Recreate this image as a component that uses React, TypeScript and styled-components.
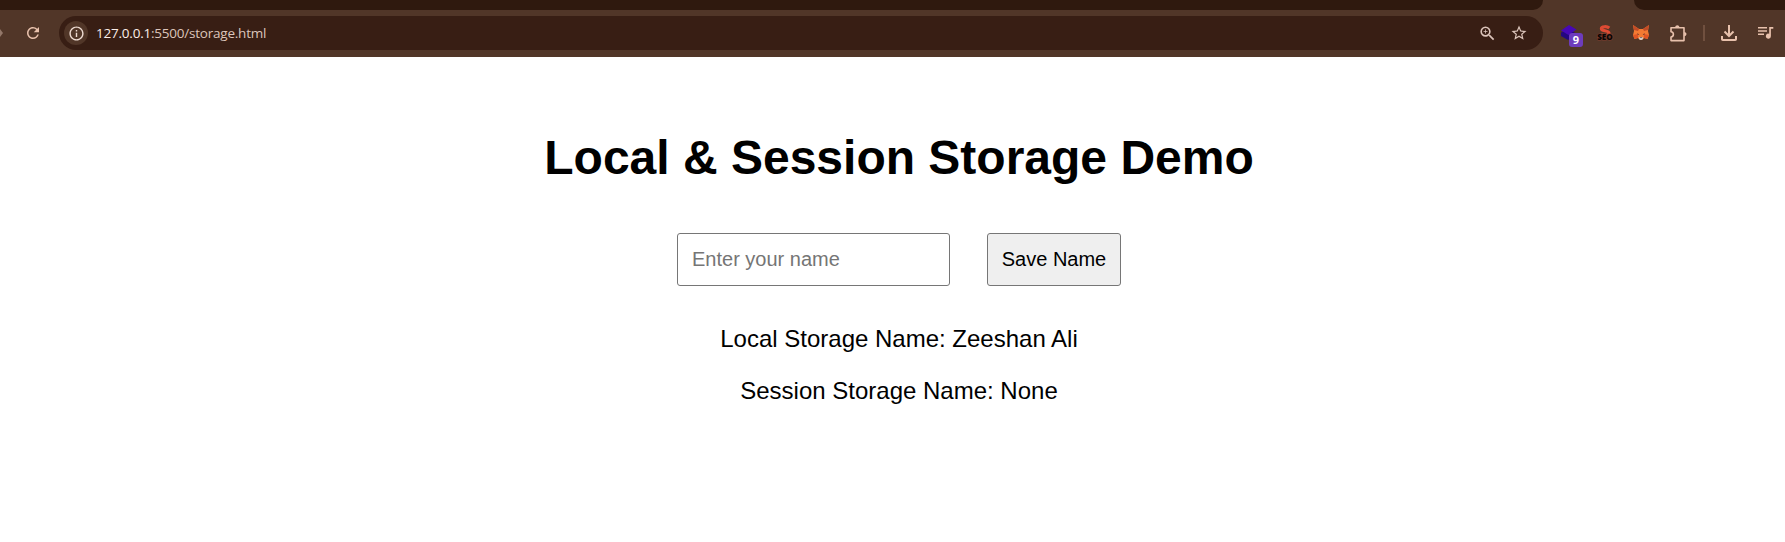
import React from "react";
import styled, { createGlobalStyle } from "styled-components";
import { MdRefresh, MdOutlineInfo, MdZoomIn, MdStarOutline } from "react-icons/md";

const GlobalStyle = createGlobalStyle`
  * { box-sizing: border-box; }
  body { margin: 0; background: #fff; overflow: hidden; }
`;

const Screen = styled.div`
  width: 1785px;
  height: 542px;
  overflow: hidden;
  background: #fff;
`;

const TabStrip = styled.div`
  display: flex;
  justify-content: space-between;
  height: 10px;
  background: #513628;
`;

const InactiveTabs = styled.div<{ $width: number; $side: "left" | "right" }>`
  width: ${(p) => p.$width}px;
  height: 10px;
  background: #2f190e;
  border-radius: ${(p) => (p.$side === "left" ? "0 0 10px 0" : "0 0 0 10px")};
`;

const Toolbar = styled.div`
  display: flex;
  align-items: center;
  height: 47px;
  padding-bottom: 1px;
  background: #513628;
  color: #e8c1ac;
`;

const Navigation = styled.div`
  display: flex;
  align-items: center;
  width: 59px;
  gap: 20px;
  svg { display: block; flex: none; }
`;

const AddressBar = styled.div`
  display: flex;
  align-items: center;
  width: 1484px;
  height: 34px;
  padding: 0 15px 0 5px;
  border-radius: 17px;
  background: #381e14;
  color: #dcc5bb;
`;

const SiteInfo = styled.div`
  display: grid;
  place-items: center;
  width: 24px;
  height: 24px;
  border-radius: 50%;
  background: #513628;
  color: #eedbd2;
`;

const Url = styled.div`
  flex: 1;
  padding-left: 8px;
  font: 13.5px/20px "Open Sans", sans-serif;
  letter-spacing: -0.22px;
  color: #dcc5bb;
  span { color: #fbeee8; }
`;

const BarActions = styled.div`
  display: flex;
  align-items: center;
  gap: 13px;
`;

const Extensions = styled.div`
  display: flex;
  align-items: center;
  padding-left: 17px;
  svg { display: block; overflow: visible; }
`;

const Slot = styled.div<{ $gap: number }>`
  position: relative;
  flex: none;
  margin-right: ${(p) => p.$gap}px;
`;

const Badge = styled.span`
  position: absolute;
  left: 9px;
  top: 8px;
  width: 14px;
  height: 14px;
  border-radius: 3px;
  background: #6d3cbd;
  color: #fff;
  font: bold 11px/14px "Open Sans", sans-serif;
  text-align: center;
`;

const Divider = styled.div`
  width: 2px;
  height: 16px;
  margin-right: 16px;
  background: #70503f;
`;

const Page = styled.main`
  display: flex;
  flex-direction: column;
  align-items: center;
  width: 1798px;
  padding-top: 74px;
  font-family: "Liberation Sans", Arial, sans-serif;
  color: #000;
`;

const Title = styled.h1`
  margin: 0;
  font-size: 48px;
  line-height: 54px;
  white-space: nowrap;
`;

const Form = styled.div`
  display: flex;
  gap: 37px;
  margin-top: 48px;
`;

const NameInput = styled.input`
  width: 273px;
  height: 53px;
  padding: 1px 14px 1px;
  border: 1px solid #767676;
  border-radius: 3px;
  background: #fff;
  font: 20px "Liberation Sans", Arial, sans-serif;
  &::placeholder { color: #757575; }
`;

const SaveButton = styled.button`
  width: 134px;
  height: 53px;
  padding: 0;
  border: 1px solid #767676;
  border-radius: 3px;
  background: #efefef;
  color: #000;
  font: 20px "Liberation Sans", Arial, sans-serif;
`;

const Result = styled.p`
  margin: 0 0 24px;
  font-size: 24px;
  line-height: 28px;
  white-space: nowrap;
`;

const Results = styled.div`
  margin-top: 39px;
  text-align: center;
`;

const ForwardTip = () => (
  <svg width="4" height="8" viewBox="0 0 4 8"><path d="M0 0L3 4L0 8Z" fill="#937769" /></svg>
);

const LayersIcon = () => (
  <svg width="17" height="16" viewBox="0 0 17 16">
    <path d="M1 7.5L8 4L17 9L8 15L1 11Z" fill="#24077f" />
    <path d="M1 5.5L9 0L16.5 4.5L8.5 10Z" fill="#4708b5" />
  </svg>
);

const SeoIcon = () => (
  <svg width="16" height="17" viewBox="0 0 16 17">
    <path d="M12.3 3C10 1.2 4.4 1.2 4.4 3.7C4.4 6.2 12 5.2 12 8.2C12 11 7 11.2 4 9.5" fill="none" stroke="#dd4a33" strokeWidth="3.2" />
    <text x="8" y="15" textAnchor="middle" fontFamily="Open Sans, sans-serif" fontWeight="800" fontSize="8.2" fill="#080504" stroke="#7d3a2c" strokeWidth="1.2" paintOrder="stroke">SEO</text>
  </svg>
);

const FoxIcon = () => (
  <svg width="16" height="16" viewBox="0 0 16 16">
    <path d="M0 0L6 4H10L16 0L15 6L16 10L14.5 14L11 13L9 15H7L5 13L1.5 14L0 10L1 6Z" fill="#f37a32" />
    <path d="M0 0L6 4L5 6L1 5ZM16 0L10 4L11 6L15 5Z" fill="#c14b26" />
    <path d="M0 10L5 9L5 13L1.5 14ZM16 10L11 9L11 13L14.5 14Z" fill="#df5625" />
    <path d="M4 8.3L6.2 9.3L5 10ZM12 8.3L9.8 9.3L11 10Z" fill="#5a3430" />
    <path d="M5.5 13L7 12H9L10.5 13L9 15H7Z" fill="#d3c7be" />
    <path d="M7.2 12.2H8.8L9 13H7Z" fill="#5a4a48" />
  </svg>
);

const PuzzleIcon = () => (
  <svg width="17" height="17" viewBox="0 0 17 17" fill="none" stroke="currentColor" strokeWidth="1.6" strokeLinejoin="round">
    <path d="M1 2.8H14V15.6H1V12C4.2 11.8 4.2 6.9 1 6.7Z" />
    <path d="M5.2 2.4C5.2 -.5 9.4 -.5 9.4 2.4ZM14.2 7C17.2 7 17.2 11.2 14.2 11.2Z" fill="currentColor" stroke="none" />
  </svg>
);

const DownloadIcon = () => (
  <svg width="16" height="16" viewBox="0 0 16 16" fill="none" stroke="currentColor" strokeWidth="2">
    <path d="M8 0V10.5M3.5 6.5L8 11L12.5 6.5" />
    <path d="M1 11V14.2Q1 15 1.8 15H14.2Q15 15 15 14.2V11" />
  </svg>
);

const PlaylistIcon = () => (
  <svg width="16" height="12" viewBox="0 0 16 12" fill="currentColor">
    <path d="M0 0H9V1.6H0ZM0 3.2H9V4.8H0ZM0 6.4H6V8H0ZM11.2 0H15.3V1.8H12.9V9.2A2.5 2.5 0 1 1 11.2 6.8Z" />
  </svg>
);

export default function App() {
  return (
    <Screen>
      <GlobalStyle />
      <TabStrip>
        <InactiveTabs $width={1543} $side="left" />
        <InactiveTabs $width={151} $side="right" />
      </TabStrip>
      <Toolbar>
        <Navigation>
          <ForwardTip />
          <MdRefresh size={18} />
        </Navigation>
        <AddressBar>
          <SiteInfo><MdOutlineInfo size={17} /></SiteInfo>
          <Url><span>127.0.0.1</span>:5500/storage.html</Url>
          <BarActions>
            <MdZoomIn size={19} />
            <MdStarOutline size={18} />
          </BarActions>
        </AddressBar>
        <Extensions>
          <Slot $gap={20}><LayersIcon /><Badge>9</Badge></Slot>
          <Slot $gap={20}><SeoIcon /></Slot>
          <Slot $gap={21}><FoxIcon /></Slot>
          <Slot $gap={16}><PuzzleIcon /></Slot>
          <Divider />
          <Slot $gap={21}><DownloadIcon /></Slot>
          <PlaylistIcon />
        </Extensions>
      </Toolbar>
      <Page>
        <Title>Local &amp; Session Storage Demo</Title>
        <Form>
          <NameInput placeholder="Enter your name" />
          <SaveButton>Save Name</SaveButton>
        </Form>
        <Results>
          <Result>Local Storage Name: Zeeshan Ali</Result>
          <Result>Session Storage Name: None</Result>
        </Results>
      </Page>
    </Screen>
  );
}
